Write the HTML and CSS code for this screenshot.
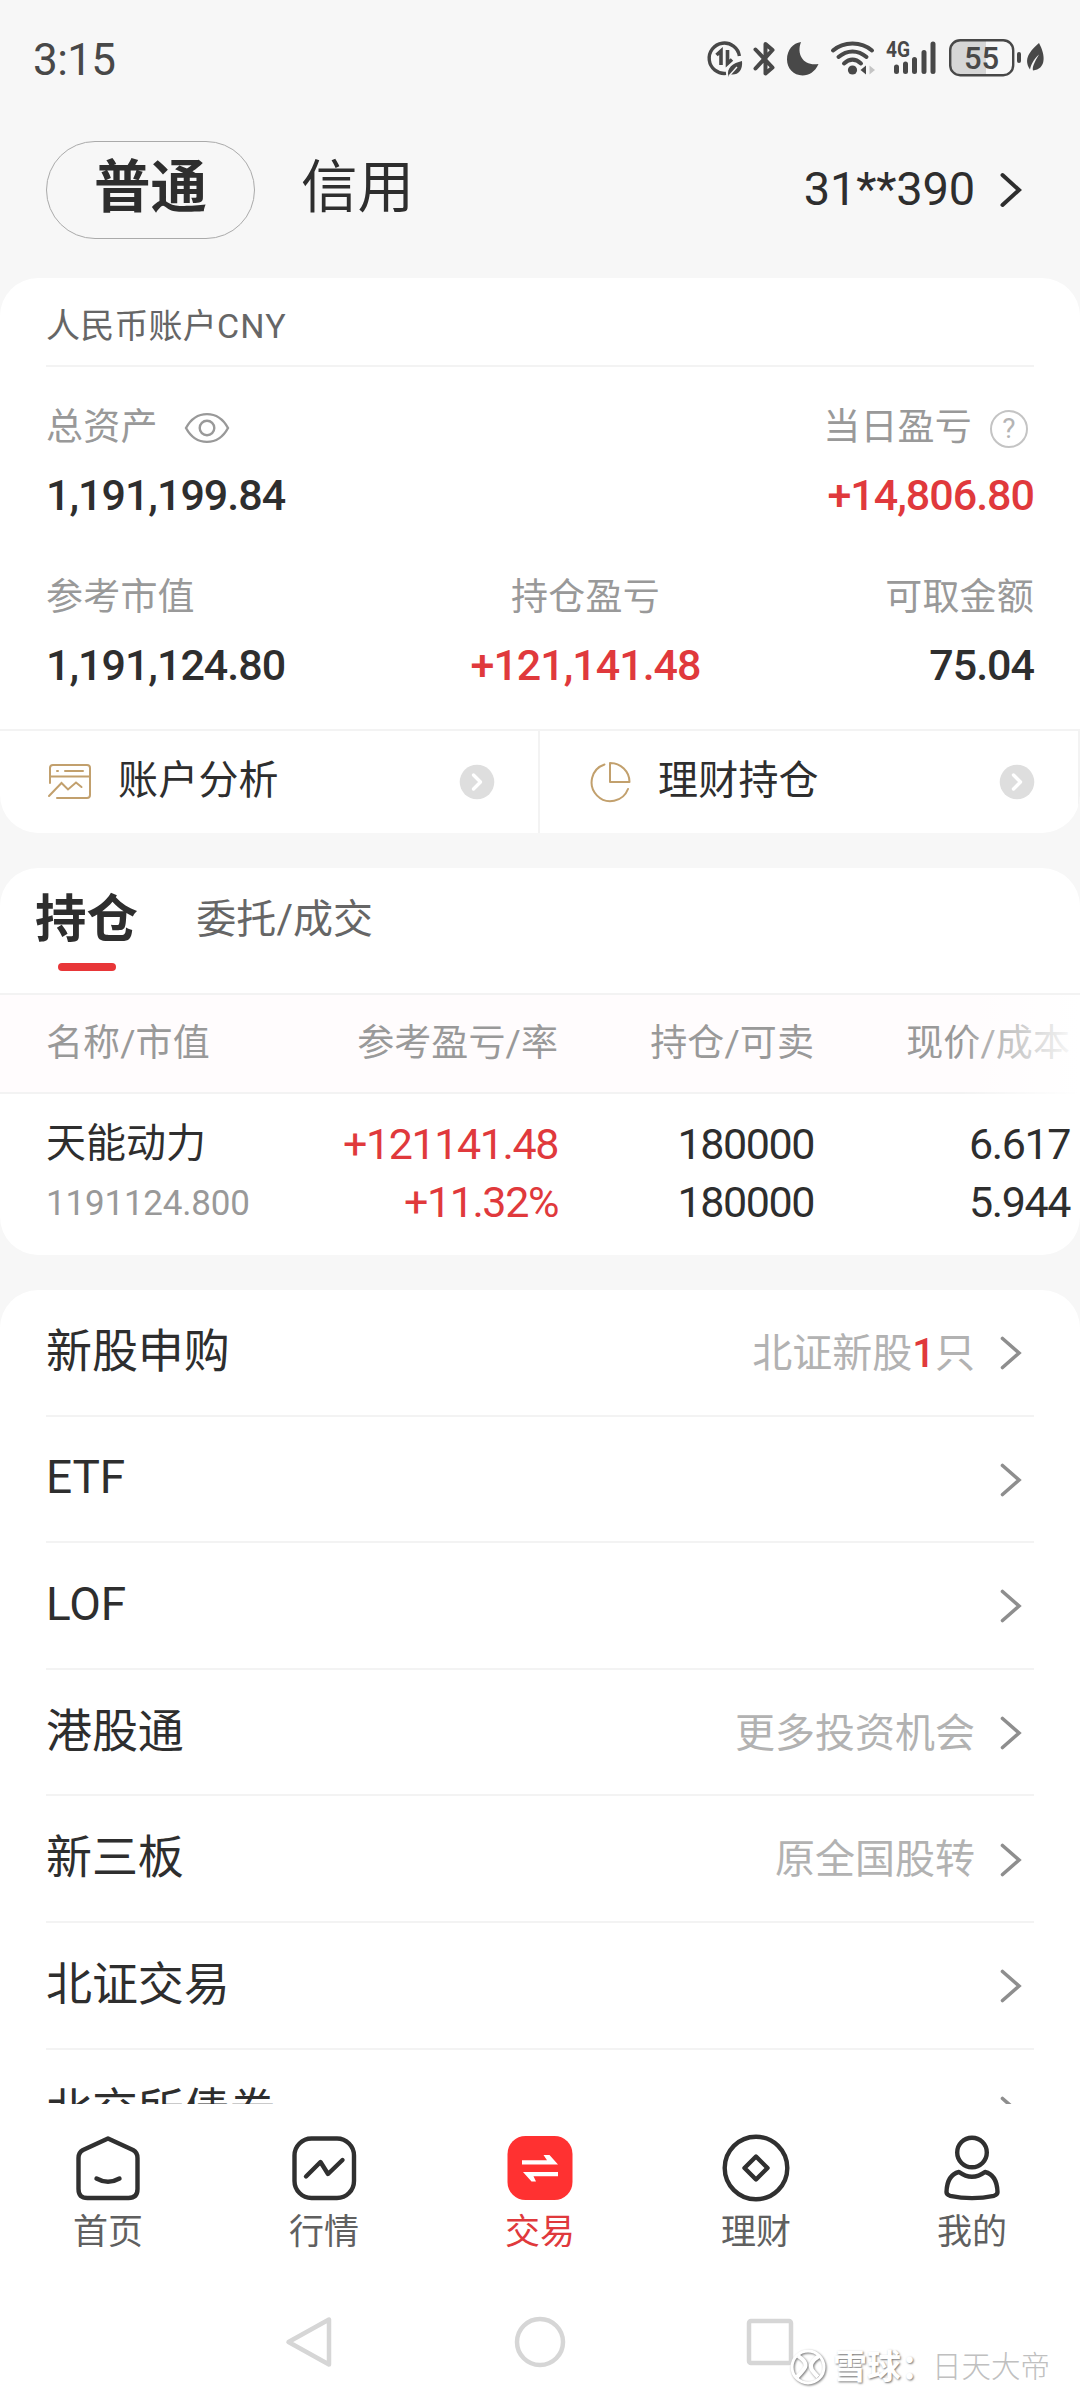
FILE: index.html
```html
<!DOCTYPE html>
<html lang="zh-CN">
<head>
    <meta charset="UTF-8">
    <meta name="viewport" content="width=device-width, initial-scale=1.0">
    <title>交易</title>
    <link rel="stylesheet" href="styles.css">
</head>
<body>

    <svg class="sprite" width="0" height="0">
        <symbol id="chevron" viewBox="0 0 24 40">
            <path d="M3.5 5 L20 20 L3.5 35" fill="none" stroke="currentColor" stroke-width="4" stroke-linecap="round" stroke-linejoin="miter"/>
        </symbol>
        <symbol id="chevron-small" viewBox="0 0 24 40">
            <path d="M3.5 6.5 L20 21 L3.5 35.5" fill="none" stroke="currentColor" stroke-width="3.6" stroke-linecap="round" stroke-linejoin="miter"/>
        </symbol>
        <symbol id="go" viewBox="0 0 36 36">
            <circle cx="18" cy="18" r="17.3" fill="#dedede"/>
            <path d="M14.5 11 L21.5 18 L14.5 25" fill="none" stroke="#fff" stroke-width="3.4" stroke-linecap="round" stroke-linejoin="round"/>
        </symbol>
    </svg>

    <div class="screen">

        <div class="status-bar">
            <span class="time">3:15</span>
            <div class="status-icons">
                <!-- data saver -->
                <svg class="st-data" width="36" height="40" viewBox="0 0 36 40">
                    <path d="M19 34.4 A15.2 15.2 0 1 1 32.4 17" fill="none" stroke="#484848" stroke-width="3.4"/>
                    <path d="M9.5 16 L14 12 V26 M20.500 11 V24.500 L25 20.500" fill="none" stroke="#484848" stroke-width="3.6"/>
                    <path d="M35 22 C36 31 31 36.5 24 35.5 L21.5 37.5 C19 29 26 24 35 22 Z" fill="#484848"/>
                    <path d="M22 37 L30 28" stroke="#f7f7f7" stroke-width="1.4"/>
                </svg>
                <!-- bluetooth -->
                <svg class="st-bt" width="24" height="40" viewBox="0 0 24 40">
                    <path d="M3.5 10.5 L20.5 28.5 L13.5 34.5 V5 L20.5 11 L3.5 29.5" fill="none" stroke="#484848" stroke-width="4" stroke-linecap="round" stroke-linejoin="round"/>
                </svg>
                <!-- do not disturb -->
                <svg class="st-moon" width="34" height="40" viewBox="0 0 34 40">
                    <path d="M15 3 C10 16 18 27.5 32.5 25 C29 33 23 36.4 16.5 36.4 C7.5 36.4 1 29.5 1 20.5 C1 11 7 4 15 3 Z" fill="#484848"/>
                </svg>
                <!-- wifi -->
                <svg class="st-wifi" width="46" height="40" viewBox="0 0 46 40">
                    <g fill="none" stroke="#484848" stroke-width="4" stroke-linecap="round">
                        <path d="M3 11.5 C13.5 2 31.5 2 42 11.5"/>
                        <path d="M8.5 18 C17 10.5 28 10.5 36.5 18"/>
                        <path d="M14 24.5 C19.5 19.5 25.5 19.5 31 24.5"/>
                    </g>
                    <circle cx="22.5" cy="31" r="4.6" fill="#484848"/>
                    <path d="M30.5 31 L36 26.5 V35.5 Z" fill="#484848"/>
                    <path d="M45 31 L39.5 26.5 V35.5 Z" fill="#c4c4c4"/>
                </svg>
                <!-- signal -->
                <svg class="st-signal" width="52" height="40" viewBox="0 0 52 40">
                    <text class="net" x="0" y="18" textLength="24" lengthAdjust="spacingAndGlyphs">4G</text>
                    <path d="M10.5 28 V32.5 M19.5 25 V32.5 M28.5 20.5 V32.5 M38 13.5 V32.5 M47 5 V32.5" stroke="#484848" stroke-width="5" stroke-linecap="round"/>
                </svg>
                <!-- battery -->
                <svg class="st-battery" width="78" height="40" viewBox="0 0 78 40">
                    <path d="M11 2 H38 V36 H11 Q3 36 3 26 V12 Q3 2 11 2 Z" fill="#d6d6d6"/>
                    <rect x="2.2" y="1.2" width="63" height="35" rx="10" fill="none" stroke="#484848" stroke-width="2.4"/>
                    <path d="M71 15 V22" stroke="#484848" stroke-width="4" stroke-linecap="round"/>
                    <text class="level" x="33.5" y="29.5" text-anchor="middle">55</text>
                </svg>
                <!-- power saving leaf -->
                <svg class="st-leaf" width="20" height="40" viewBox="0 0 20 40">
                    <path d="M13 4 C20 17 20 30 7 31.5 C6 28 8 24 13 15.5 C7 21 5 26 4 30.5 C-3 20 4 12 13 4 Z" fill="#484848"/>
                </svg>
            </div>
        </div>

        <div class="header">
            <span class="pill">普通</span>
            <span class="credit">信用</span>
            <span class="account">31**390</span>
            <svg class="chev chev-dark"><use href="#chevron"/></svg>
        </div>

        <div class="content">

            <div class="card assets">
                <div class="assets-title">人民币账户<span>CNY</span></div>
                <div class="stats stats-two">
                    <div class="stat">
                        <div class="label">总资产
                            <svg class="eye" width="46" height="34" viewBox="0 0 46 34" fill="none" stroke="#999" stroke-width="2.4">
                                <path d="M2 17 C12 -1.5 34 -1.5 44 17 C34 35.5 12 35.5 2 17 Z"/>
                                <circle cx="23" cy="17" r="7.3"/>
                            </svg>
                        </div>
                        <div class="value">1,191,199.84</div>
                    </div>
                    <div class="stat right">
                        <div class="label">当日盈亏<span class="help">?</span></div>
                        <div class="value red">+14,806.80</div>
                    </div>
                </div>
                <div class="stats stats-three">
                    <div class="stat">
                        <div class="label">参考市值</div>
                        <div class="value">1,191,124.80</div>
                    </div>
                    <div class="stat center">
                        <div class="label">持仓盈亏</div>
                        <div class="value red">+121,141.48</div>
                    </div>
                    <div class="stat right">
                        <div class="label">可取金额</div>
                        <div class="value">75.04</div>
                    </div>
                </div>
                <div class="links">
                    <div class="link">
                        <svg width="46" height="40" viewBox="0 0 46 40" fill="none" stroke="#c2a06d" stroke-width="2" stroke-linecap="round">
                            <path d="M3 21 V6 Q3 3 6 3 H40 Q43 3 43 6 V33 Q43 36 40 36 H10 M3 14.5 H43 M18 9 H36 M10 9 H11"/>
                            <path d="M2 34 L14.5 21 L21 27.5 L29 20.5 L34.5 25"/>
                        </svg>
                        <span>账户分析</span>
                        <svg class="go"><use href="#go"/></svg>
                    </div>
                    <div class="link">
                        <svg width="46" height="42" viewBox="0 0 46 42" fill="none" stroke="#c2a06d" stroke-width="2" stroke-linejoin="round" stroke-linecap="round">
                            <path d="M17.5 3.5 A18.8 18.8 0 1 0 41 28"/>
                            <path d="M23 2 V21 H42.5 A19.5 19 0 0 0 23 2 Z"/>
                        </svg>
                        <span>理财持仓</span>
                        <svg class="go"><use href="#go"/></svg>
                    </div>
                </div>
            </div>

            <div class="card holdings">
                <div class="tabs">
                    <span class="tab active">持仓</span>
                    <span class="tab">委托/成交</span>
                </div>
                <div class="row thead">
                    <span>名称/市值</span>
                    <span>参考盈亏/率</span>
                    <span>持仓/可卖</span>
                    <span>现价/成本</span>
                </div>
                <div class="row tbody">
                    <div>天能动力<br><small>1191124.800</small></div>
                    <div class="red">+121141.48<br>+11.32%</div>
                    <div>180000<br>180000</div>
                    <div>6.617<br>5.944</div>
                </div>
            </div>

            <div class="card menu">
                <div class="item"><span>新股申购</span><em>北证新股<b>1</b>只</em><svg class="chev"><use href="#chevron-small"/></svg></div>
                <div class="item"><span>ETF</span><svg class="chev"><use href="#chevron-small"/></svg></div>
                <div class="item"><span>LOF</span><svg class="chev"><use href="#chevron-small"/></svg></div>
                <div class="item"><span>港股通</span><em>更多投资机会</em><svg class="chev"><use href="#chevron-small"/></svg></div>
                <div class="item"><span>新三板</span><em>原全国股转</em><svg class="chev"><use href="#chevron-small"/></svg></div>
                <div class="item"><span>北证交易</span><svg class="chev"><use href="#chevron-small"/></svg></div>
                <div class="item"><span>北交所债券</span><svg class="chev"><use href="#chevron-small"/></svg></div>
            </div>

        </div>

        <div class="tabbar">
            <div class="nav">
                <svg viewBox="0 0 70 70" fill="none" stroke="#303030" stroke-width="4.4" stroke-linejoin="round" stroke-linecap="round">
                    <path d="M35 4.5 L60 16 Q64.5 18.5 64.5 24 V55 Q64.5 64 55.5 64 H14.5 Q5.5 64 5.5 55 V24 Q5.5 18.5 10 16 Z"/>
                    <path d="M23.5 44.500 Q35 51 46.500 44.500"/>
                </svg>
                <span>首页</span>
            </div>
            <div class="nav">
                <svg viewBox="0 0 70 70" fill="none" stroke="#303030" stroke-width="4.4" stroke-linejoin="round" stroke-linecap="round">
                    <rect x="5.5" y="4.5" width="59.5" height="59.5" rx="17"/>
                    <path d="M17 42.5 L31.5 28 L39 40 L53.5 26"/>
                </svg>
                <span>行情</span>
            </div>
            <div class="nav on">
                <svg viewBox="0 0 70 70">
                    <rect x="2.5" y="2" width="65" height="64" rx="18" fill="#ff3131"/>
                    <path d="M17 26.2 H42 L38.5 21 H44.500 L53 30.400 H17 Z M53 38 H18 L26.500 47.500 H31 L28.500 42.300 H53 Z" fill="#fff"/>
                </svg>
                <span>交易</span>
            </div>
            <div class="nav">
                <svg viewBox="0 0 70 70" fill="none" stroke="#303030" stroke-width="4.4" stroke-linejoin="round">
                    <circle cx="35" cy="34" r="31.3"/>
                    <path d="M35 22.5 L46.5 34 L35 45.5 L23.5 34 Z"/>
                </svg>
                <span>理财</span>
            </div>
            <div class="nav">
                <svg viewBox="0 0 70 70" fill="none" stroke="#303030" stroke-width="4.4" stroke-linejoin="round">
                    <circle cx="35" cy="18.5" r="14.8"/>
                    <path d="M22 38 Q35 47.5 48 38 Q60 41 60.5 58 Q60.5 60.5 57 61.800 Q35 66.5 13 61.800 Q9.5 60.5 9.5 58 Q10 41 22 38 Z"/>
                </svg>
                <span>我的</span>
            </div>
        </div>

        <div class="sysnav">
            <svg width="54" height="54" viewBox="0 0 54 54"><path d="M46 4.5 V49.5 L5.5 27 Z"/></svg>
            <svg width="54" height="54" viewBox="0 0 54 54"><circle cx="27" cy="27" r="23"/></svg>
            <svg width="54" height="54" viewBox="0 0 54 54"><rect x="6" y="6" width="42" height="42" rx="2"/></svg>
        </div>

        <div class="watermark">
            <svg width="38" height="38" viewBox="0 0 38 38" fill="none" stroke="#fff" stroke-width="3">
                <circle cx="19" cy="19" r="16"/>
                <path d="M9 8 Q20 15 15 21 Q12 25 8 29 M30 8 Q19 15 23 22 Q26 26 29 29" stroke-width="4"/>
            </svg>
            <b>雪球：</b><span>日天大帝</span>
        </div>

    </div>

</body>
</html>
```

FILE: styles.css
```css
* {
    box-sizing: border-box;
}
body {
    margin: 0;
    background-color: #fff;
    color: #2e2e2e;
    font-family: Roboto, "Noto Sans CJK SC", sans-serif;
}
.sprite {
    position: absolute;
}
.screen {
    position: relative;
    width: 1080px;
    height: 2400px;
    overflow: hidden;
    display: flex;
    flex-direction: column;
    background-color: #f7f7f7;
}
.red {
    color: #e0393c;
}

/* status bar */
.status-bar {
    height: 118px;
    padding: 0 34px 0 33px;
    display: flex;
    align-items: center;
    justify-content: space-between;
    flex-shrink: 0;
}
.time {
    padding-top: 2px;
    font-size: 44px;
    line-height: 60px;
    color: #484848;
    letter-spacing: -0.6px;
}
.status-icons {
    display: flex;
    align-items: center;
}
.status-icons svg {
    overflow: visible;
}
.st-bt {
    margin-left: 9px;
}
.st-moon {
    margin-left: 10px;
}
.st-wifi {
    margin-left: 10px;
}
.st-signal {
    margin-left: 10px;
}
.st-battery {
    margin-left: 10px;
}
.net {
    font-size: 22px;
    font-weight: 700;
    fill: #484848;
}
.level {
    font-size: 31px;
    font-weight: 500;
    fill: #484848;
}

/* account switch */
.header {
    height: 160px;
    padding: 23px 57px 39px 46px;
    display: flex;
    align-items: center;
    flex-shrink: 0;
}
.pill {
    width: 209px;
    height: 98px;
    border: 1px solid #aaa;
    border-radius: 49px;
    text-align: center;
    font-size: 56.5px;
    font-weight: 700;
    line-height: 93px;
}
.credit {
    margin-left: 46px;
    font-size: 56.5px;
    line-height: 93px;
    padding-bottom: 3px;
}
.account {
    margin-left: auto;
    margin-right: 24px;
    font-size: 47px;
    line-height: 96px;
    padding-bottom: 2px;
    letter-spacing: -0.2px;
}
.chev {
    width: 24px;
    height: 40px;
    color: #8e8e8e;
    flex-shrink: 0;
}
.chev-dark {
    color: #2e2e2e;
}

/* cards */
.content {
    flex: 1;
    min-height: 0;
    overflow: hidden;
    display: flex;
    flex-direction: column;
    gap: 35px;
}
.card {
    background-color: #fff;
    border-radius: 38px;
    overflow: hidden;
    flex-shrink: 0;
}
.assets {
    height: 555px;
    display: flex;
    flex-direction: column;
}
.assets-title {
    height: 89px;
    margin: 0 46px;
    padding-top: 15px;
    border-bottom: 2px solid #f3f3f3;
    color: #666;
    font-size: 34px;
    line-height: 66px;
    letter-spacing: 0.2px;
}
.assets-title span {
    letter-spacing: 1.2px;
}
.stats {
    display: grid;
    padding: 0 46px;
    height: 170px;
}
.stats-two {
    grid-template-columns: 1fr 1fr;
    padding-top: 27px;
}
/* middle column sits right of centre, equal gaps between the values */
.stats-three {
    grid-template-columns: 1fr 230px 1fr;
    padding-top: 27px;
    padding-left: 137px;
    height: 192px;
}
.stats-three .stat:first-child {
    margin-left: -91px;
}
.label {
    display: flex;
    align-items: center;
    height: 68px;
    color: #999;
    font-size: 37px;
    line-height: 68px;
    letter-spacing: 0.2px;
    white-space: nowrap;
}
.value {
    height: 68px;
    font-size: 43px;
    font-weight: 500;
    line-height: 66px;
    letter-spacing: -1px;
    white-space: nowrap;
}
.eye {
    margin-left: 26px;
}
.help {
    width: 38px;
    height: 38px;
    margin: 1px 6px 0 18px;
    border: 2px solid #c4c4c4;
    border-radius: 50%;
    color: #b4b4b4;
    font-size: 28px;
    line-height: 34px;
    text-align: center;
}
.right .label {
    justify-content: flex-end;
}
.right .value {
    text-align: right;
}
.center .label {
    justify-content: center;
}
.center .value {
    text-align: center;
}
.links {
    flex: 1;
    display: grid;
    grid-template-columns: 1fr 1fr;
    border-top: 2px solid #f3f3f3;
}
.link {
    display: flex;
    align-items: center;
    padding: 0 43px 0 47px;
    border-right: 2px solid #f3f3f3;
    font-size: 40px;
    line-height: 96px;
    letter-spacing: 0.2px;
}
.link span {
    flex: 1;
    margin-left: 25px;
    padding-bottom: 2px;
}
.go {
    width: 36px;
    height: 36px;
}

/* positions table */
.tabs {
    height: 127px;
    display: flex;
    padding-left: 35px;
    border-bottom: 2px solid #f3f3f3;
    gap: 58px;
}
.tab {
    color: #666;
    font-size: 40px;
    line-height: 103px;
    letter-spacing: 0.1px;
}
.tab.active {
    color: #2e2e2e;
    font-size: 51.5px;
    font-weight: 700;
    display: flex;
    flex-direction: column;
    align-items: center;
}
.tab.active::after {
    content: "";
    width: 58px;
    height: 8px;
    margin-top: -8px;
    border-radius: 4px;
    background-color: #e83638;
}
.row {
    display: grid;
    grid-template-columns: 250px 262px 256px 256px;
    padding: 0 9px 0 46px;
}
.row > * {
    text-align: right;
    white-space: nowrap;
}
.row > *:first-child {
    text-align: left;
}
.thead {
    position: relative;
    height: 99px;
    background-color: #fffcfd;
    border-bottom: 2px solid #f3f3f3;
    color: #999;
    font-size: 37px;
    line-height: 97px;
    letter-spacing: 0.1px;
}
.thead::after {
    content: "";
    position: absolute;
    top: 0;
    right: 0;
    width: 120px;
    height: 99px;
    background: linear-gradient(to right, rgba(255, 255, 255, 0), #fff);
}
.tbody {
    height: 161px;
    padding-top: 21px;
    font-size: 43px;
    line-height: 58px;
    letter-spacing: -1.4px;
}
.tbody > *:first-child {
    font-size: 40px;
    letter-spacing: 0;
}
.tbody small {
    font-size: 35px;
    color: #999;
    letter-spacing: -0.2px;
}

/* menu list */
.menu {
    padding: 0 46px;
}
.item {
    height: 126.6px;
    padding-right: 11px;
    display: flex;
    align-items: center;
    border-bottom: 2px solid #f3f3f3;
    font-size: 46px;
    line-height: 121px;
    letter-spacing: -0.1px;
}
.item span {
    flex: 1;
    padding-bottom: 2px;
}
.item em {
    margin-right: 24px;
    color: #b2b2b2;
    font-size: 40px;
    font-style: normal;
    letter-spacing: 0;
    padding-top: 2px;
}
.item b {
    color: #e0393c;
    font-weight: 500;
}

/* bottom tabs */
.tabbar {
    height: 180px;
    padding-top: 30px;
    display: grid;
    grid-template-columns: repeat(5, 1fr);
    background-color: #fff;
    flex-shrink: 0;
}
.nav {
    display: flex;
    flex-direction: column;
    align-items: center;
    color: #606060;
    font-size: 35px;
    line-height: 50px;
}
.nav svg {
    width: 70px;
    height: 70px;
    margin: 0 1px 4px 0;
}
.nav.on {
    color: #e0393c;
}
.sysnav {
    height: 116px;
    padding-right: 1px;
    display: flex;
    align-items: center;
    justify-content: center;
    gap: 176px;
    background-color: #fff;
    flex-shrink: 0;
}
.sysnav svg {
    fill: none;
    stroke: #d6d6d6;
    stroke-width: 4.5;
    stroke-linejoin: round;
}
.watermark {
    position: absolute;
    left: 789px;
    top: 2343px;
    display: flex;
    align-items: center;
    height: 48px;
    font-size: 34px;
    line-height: 48px;
    color: #fff;
}
.watermark svg {
    filter: drop-shadow(1px 1px 1px #777);
    margin-right: 6px;
}
.watermark b {
    width: 99px;
    text-shadow: 1px 1px 2px #777;
    white-space: nowrap;
}
.watermark span {
    color: #c0c0c0;
    font-size: 29.5px;
    font-weight: 300;
}
```
